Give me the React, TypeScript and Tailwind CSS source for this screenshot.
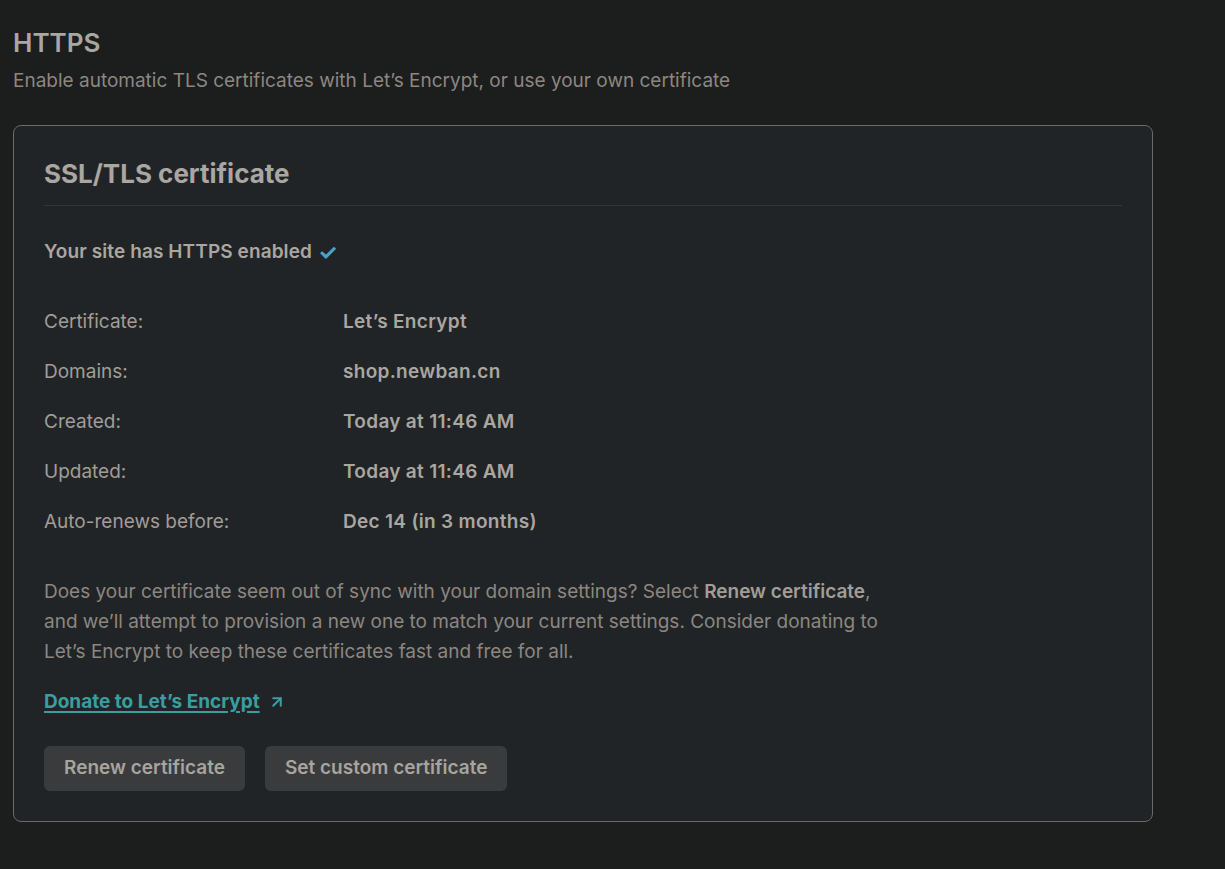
import { ArrowUpRight } from 'lucide-react'

const details = [
    { label: "Certificate:", value: "Let’s Encrypt" },
    { label: "Domains:", value: "shop.newban.cn" },
    { label: "Created:", value: "Today at 11:46 AM" },
    { label: "Updated:", value: "Today at 11:46 AM" },
    { label: "Auto-renews before:", value: "Dec 14 (in 3 months)" },
]

const App = () => {
    return (
        <div
            className="min-h-screen w-full bg-[#1c1d1d] text-[#a8a49f] pl-[13px] pr-[72px] pt-[27px]"
            style={{ fontFamily: 'Inter, "Noto Sans", sans-serif' }}
        >
            {/* Section header */}
            <h2 className="text-[26px] leading-[32px] font-semibold text-[#aaa6a1]">HTTPS</h2>
            <p className="mt-[9px] text-[19px] leading-[26px] text-[#8c8781]">
                Enable automatic TLS certificates with Let’s Encrypt, or use your own certificate
            </p>

            {/* Card */}
            <div className="mt-[31px] w-[1140px] rounded-[8px] border border-[#6d6964] bg-[#212426] px-[30px] pt-[28px] pb-[30px]">
                <h3 className="text-[26px] leading-[40px] font-bold text-[#aaa6a1] pb-[11px] border-b border-[#33373a]">
                    SSL/TLS certificate
                </h3>

                <p className="mt-[33px] text-[19px] leading-[26px] font-semibold tracking-[0.1px] text-[#aaa6a1] flex items-center gap-[6px]">
                    Your site has HTTPS enabled
                    <span className="text-[#4aa4c4] text-[22px] leading-[26px] font-bold">✓</span>
                </p>

                <div className="mt-[44px] flex flex-col gap-[24px]">
                    {details.map((row) => (
                        <div key={row.label} className="flex text-[19px] leading-[26px]">
                            <span className="w-[299px] text-[#a19d97]">{row.label}</span>
                            <span className="font-semibold tracking-[0.3px] text-[#aaa6a1]">{row.value}</span>
                        </div>
                    ))}
                </div>

                <p className="mt-[42px] text-[19px] leading-[30px] text-[#8c8781]">
                    Does your certificate seem out of sync with your domain settings? Select{" "}
                    <span className="font-semibold text-[#a19d97]">Renew certificate</span>,
                    <br />
                    and we’ll attempt to provision a new one to match your current settings. Consider donating to
                    <br />
                    Let’s Encrypt to keep these certificates fast and free for all.
                </p>

                <a
                    href="#"
                    className="mt-[20px] flex w-fit items-center gap-[8px] text-[19px] leading-[30px] font-bold text-[#3a9ea0]"
                >
                    <span className="underline underline-offset-[3px] decoration-[2px]">Donate to Let’s Encrypt</span>
                    <ArrowUpRight className="w-[18px] h-[18px]" strokeWidth={2.75} />
                </a>

                <div className="mt-[29px] flex gap-[20px]">
                    <button className="h-[45px] px-[20px] rounded-[6px] bg-[#3a3b3d] text-[19px] font-semibold text-[#a8a49f]">
                        Renew certificate
                    </button>
                    <button className="h-[45px] px-[20px] rounded-[6px] bg-[#3a3b3d] text-[19px] font-semibold text-[#a8a49f]">
                        Set custom certificate
                    </button>
                </div>
            </div>
        </div>
    )
}

export default App
